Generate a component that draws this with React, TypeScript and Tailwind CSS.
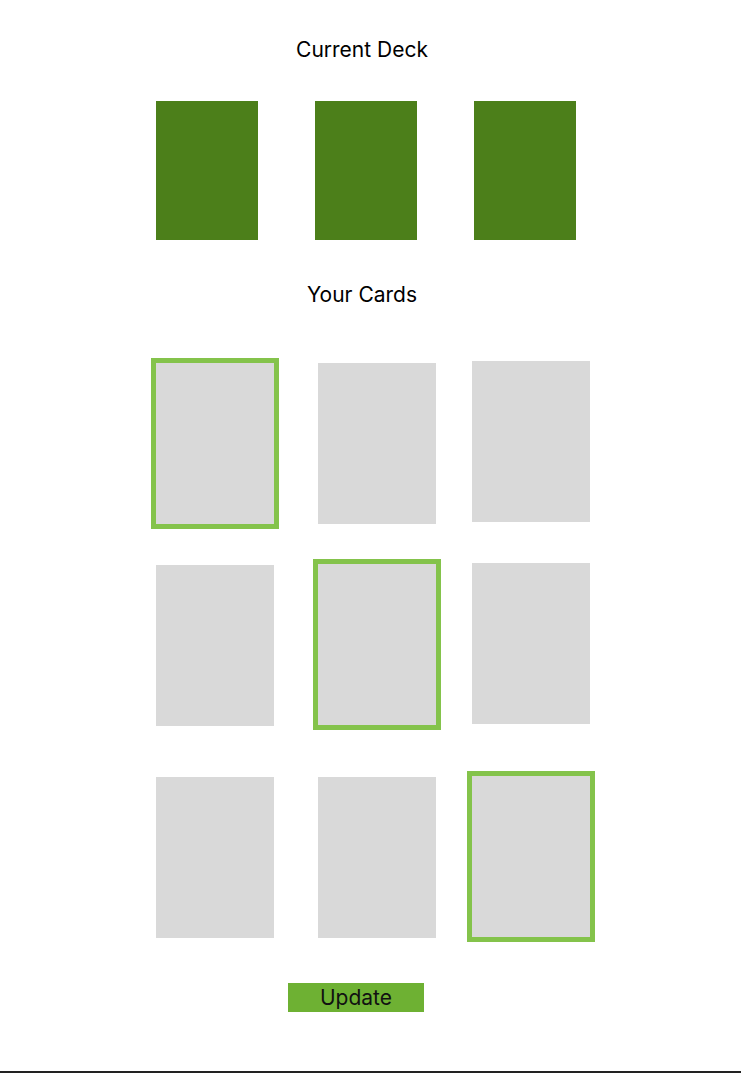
import React from "react";

function Card({ selected, cls }: { selected?: boolean; cls: string }) {
  return (
    <div
      className={
        "w-[118px] h-[161px] bg-[#d9d9d9] shrink-0 " +
        (selected ? "outline-[5px] outline-[#84c34b] " : "") +
        cls
      }
    />
  );
}

export default function App() {
  return (
    <div className="w-[741px] h-[1073px] bg-white border-b-2 border-[#222222] font-['Inter',sans-serif] text-black overflow-hidden">
      <div className="pt-[36px] w-[724px] text-center text-[21px] leading-[28px]">Current Deck</div>
      <div className="flex pl-[156px] gap-[57px] mt-[37px]">
        <div className="w-[102px] h-[139px] bg-[#4c7f1a]" />
        <div className="w-[102px] h-[139px] bg-[#4c7f1a]" />
        <div className="w-[102px] h-[139px] bg-[#4c7f1a]" />
      </div>
      <div className="mt-[41px] w-[724px] text-center text-[21px] leading-[28px]">Your Cards</div>
      <div className="flex items-start pl-[156px] mt-[52px] h-[163px]">
        <Card selected cls="mt-[2px]" />
        <Card cls="ml-[44px] mt-[2px]" />
        <Card cls="ml-[36px]" />
      </div>
      <div className="flex items-start pl-[156px] mt-[38px] h-[164px]">
        <Card cls="mt-[3px]" />
        <Card selected cls="ml-[44px] mt-[2px]" />
        <Card cls="ml-[36px] mt-[1px]" />
      </div>
      <div className="flex items-start pl-[156px] mt-[50px] h-[162px]">
        <Card cls="mt-[1px]" />
        <Card cls="ml-[44px] mt-[1px]" />
        <Card selected cls="ml-[36px]" />
      </div>
      <div className="pl-[288px] mt-[45px]">
        <button className="w-[136px] h-[29px] bg-[#6eb133] text-[21px] leading-[29px] text-[#111]">Update</button>
      </div>
    </div>
  );
}
